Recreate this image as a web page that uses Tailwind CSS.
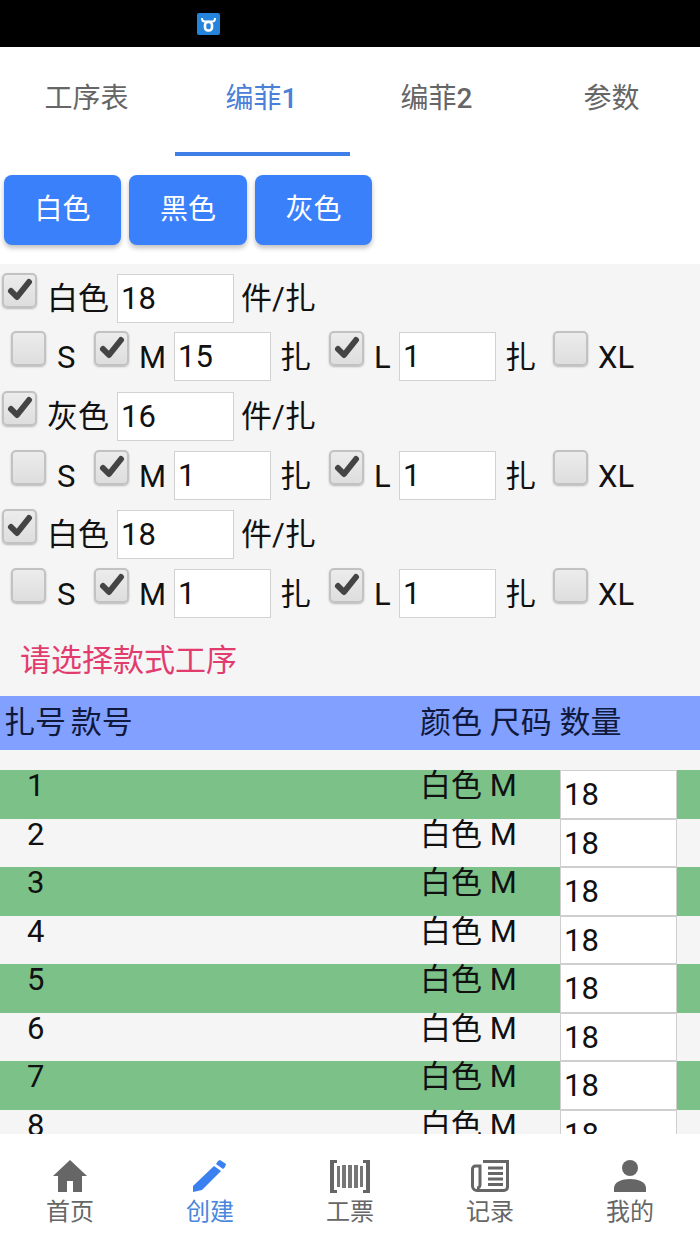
<!DOCTYPE html>
<html lang="zh">
<head>
  <meta charset="UTF-8" />
  <title>编菲</title>
  <script src="https://cdn.jsdelivr.net/npm/@tailwindcss/browser@4"></script>
</head>
<body class="bg-white font-['Roboto','Noto_Sans_CJK_SC',sans-serif]">
  <div class="w-[700px] h-[1244px] flex flex-col overflow-hidden">
    <!-- status bar -->
    <div class="h-[47px] shrink-0 bg-black pt-[13px] pl-[197px]">
      <div class="w-[23px] h-[22px] rounded-[2px] bg-[#2484dc] flex items-center justify-center">
        <svg width="17" height="17" viewBox="0 0 17 17" fill="none" stroke="#fff"><path d="M2 2c0 2.500 1 3.500 2.500 3.500h8C14 5.500 15 4.500 15 2" stroke-width="2"/><rect x="5" y="6" width="7" height="8.500" rx="3" stroke-width="2.600"/></svg>
      </div>
    </div>

    <!-- tabs -->
    <div class="h-[109px] shrink-0 grid grid-cols-4 text-[28px] text-[#666]">
      <div class="text-center pt-[31px] pr-[2px]">工序表</div>
      <div class="text-center pt-[31px] pr-[2px] text-[#4a80d8] border-b-4 border-[#3f7fe8]">编菲<span class="font-medium">1</span></div>
      <div class="text-center pt-[31px] pr-[2px]">编菲<span class="font-medium">2</span></div>
      <div class="text-center pt-[31px] pr-[2px]">参数</div>
    </div>

    <!-- colour buttons -->
    <div class="h-[108px] shrink-0 flex items-start gap-2 pt-[19px] pl-[4px]">
      <button class="w-[117px] h-[70px] rounded-lg bg-[#3b80fb] text-white text-[28px] shadow-[0_3px_5px_rgba(0,0,0,0.25)]">白色</button>
      <button class="w-[118px] h-[70px] rounded-lg bg-[#3b80fb] text-white text-[28px] shadow-[0_3px_5px_rgba(0,0,0,0.25)]">黑色</button>
      <button class="w-[117px] h-[70px] rounded-lg bg-[#3b80fb] text-white text-[28px] shadow-[0_3px_5px_rgba(0,0,0,0.25)]">灰色</button>
    </div>

    <div class="flex-1 min-h-0 overflow-hidden bg-[#f5f5f5] text-[31px] text-[#111]">
      <div id="options" class="pt-[10px]"></div>

      <div class="h-[78px] pt-[21px] pl-[20px] text-[#e23c6f] text-[31px] leading-[44px]">请选择款式工序</div>

      <!-- table head -->
      <div class="h-[54px] bg-[#82a0ff] flex items-center text-[#10193c]">
        <div class="w-[420px] pl-[4px] [word-spacing:-3px]">扎号 款号</div>
        <div>颜色 尺码 数量</div>
      </div>

      <div id="rows" class="mt-[20px]"></div>
    </div>

    <!-- bottom nav -->
    <div class="h-[110px] shrink-0 bg-white grid grid-cols-5 text-[24px] text-[#666] text-center">
      <div class="flex flex-col items-center pt-[26px]">
        <svg width="36" height="32" viewBox="0 0 36 32" fill="#666"><path d="M18 0 35 16H30V32H21V21H15V32H6V16H1Z"/></svg>
        <span class="leading-[34px] mt-[3px]">首页</span>
      </div>
      <div class="flex flex-col items-center pt-[26px] text-[#4a86dc]">
        <svg width="36" height="32" viewBox="0 0 36 32" fill="#3b80f0"><path d="M26 1 28 0 34 4 33 7 31 9 24 4Z M22 6 29 11 10 30 1 32 1 26Z"/></svg>
        <span class="leading-[34px] mt-[3px]">创建</span>
      </div>
      <div class="flex flex-col items-center pt-[26px]">
        <svg width="40" height="33" viewBox="0 0 40 33" fill="#666"><path d="M0 0H7V3H4V30H7V33H0Z M33 0H40V33H33V30H36V3H33Z"/><path fill="#777" d="M7 6h3v21H7z M12 5h4v23h-4z M18 5h4v23h-4z M24 5h4v23h-4z M30 6h3v21h-3z"/></svg>
        <span class="leading-[34px] mt-[2px]">工票</span>
      </div>
      <div class="flex flex-col items-center pt-[26px]">
        <svg width="38" height="32" viewBox="0 0 38 32" fill="none" stroke="#666" stroke-width="3"><path d="M12 1.500H36.500V27a3.500 3.500 0 0 1-3.500 3.500H6A4.500 4.500 0 0 1 1.500 26V9A3 3 0 0 1 4.500 6H9V25a3 3 0 0 1-3 3"/><path d="M17 8H32M17 13.500H32M17 19H32M17 24.500H32" stroke-width="3"/></svg>
        <span class="leading-[34px] mt-[3px]">记录</span>
      </div>
      <div class="flex flex-col items-center pt-[26px]">
        <svg width="34" height="32" viewBox="0 0 34 32" fill="#666"><circle cx="17" cy="8" r="8"/><path d="M1 32V28C1 22 9 19 17 19S33 22 33 28V32Z"/></svg>
        <span class="leading-[34px] mt-[3px]">我的</span>
      </div>
    </div>
  </div>

  <script>
    const tick = `<svg class="absolute -left-[2px] -top-[2px]" width="35" height="35" viewBox="0 0 35 35" fill="none" stroke="#444" stroke-width="6" stroke-linejoin="round" stroke-linecap="round"><path d="M9 18 15 24 27 9"/></svg>`;

    function box(checked) {
      return `<div class="relative shrink-0 w-[35px] h-[35px] -mt-[1px] rounded-[5px] border-2 border-[#c2c2c2] bg-linear-to-b from-[#ececec] to-[#dedede] shadow-[0_1px_2px_rgba(0,0,0,0.25)]">${checked ? tick : ''}</div>`;
    }

    function input(value, cls) {
      return `<div class="shrink-0 h-[49px] bg-white border border-[#d2d2d2] pl-[3px] leading-[47px] ${cls}">${value}</div>`;
    }

    const groups = [
      { name: '白色', qty: 18, m: 15, pad: 'pl-[10px]', top: '', sub: 'mt-[9px]' },
      { name: '灰色', qty: 16, m: 1, pad: 'pl-[10px]', top: 'mt-[11px]', sub: 'mt-[10px]' },
      { name: '白色', qty: 18, m: 1, pad: 'pl-[10px]', top: 'mt-[10px]', sub: 'mt-[10px]' }
    ];

    document.getElementById('options').innerHTML = groups.map(g => `
      <div class="flex h-[49px] items-start pl-[2px] leading-[49px] ${g.top}">
        ${box(true)}
        <span class="w-[80px] shrink-0 whitespace-nowrap ${g.pad}">${g.name}</span>
        ${input(g.qty, 'w-[117px]')}
        <span class="ml-[7px] whitespace-nowrap">件/扎</span>
      </div>
      <div class="flex h-[49px] items-start pl-[11px] leading-[49px] ${g.sub}">
        ${box(false)}
        <span class="ml-[11px] w-[37px] shrink-0 pt-[1px]">S</span>
        ${box(true)}
        <span class="ml-[10px] w-[35px] shrink-0 pt-[1px]">M</span>
        ${input(g.m, 'w-[97px]')}
        <span class="ml-[9px] w-[49px] shrink-0 pt-[1px]">扎</span>
        ${box(true)}
        <span class="ml-[10px] w-[25px] shrink-0 pt-[1px]">L</span>
        ${input(1, 'w-[97px]')}
        <span class="ml-[9px] w-[48px] shrink-0 pt-[1px]">扎</span>
        ${box(false)}
        <span class="ml-[10px] pt-[1px]">XL</span>
      </div>`).join('');

    document.getElementById('rows').innerHTML = [1, 2, 3, 4, 5, 6, 7, 8].map(n => `
      <div class="flex h-[48.500px] ${n % 2 ? 'bg-[#7cc188]' : 'bg-[#f5f5f5]'}">
        <div class="w-[420px] shrink-0 pl-[27px] leading-[32px]">${n}</div>
        <div class="w-[140px] shrink-0 leading-[32px]">白色 M</div>
        <div class="w-[117px] shrink-0 bg-white border border-[#cfcfcf] pl-[3px] leading-[47px]">18</div>
      </div>`).join('');
  </script>
</body>
</html>
